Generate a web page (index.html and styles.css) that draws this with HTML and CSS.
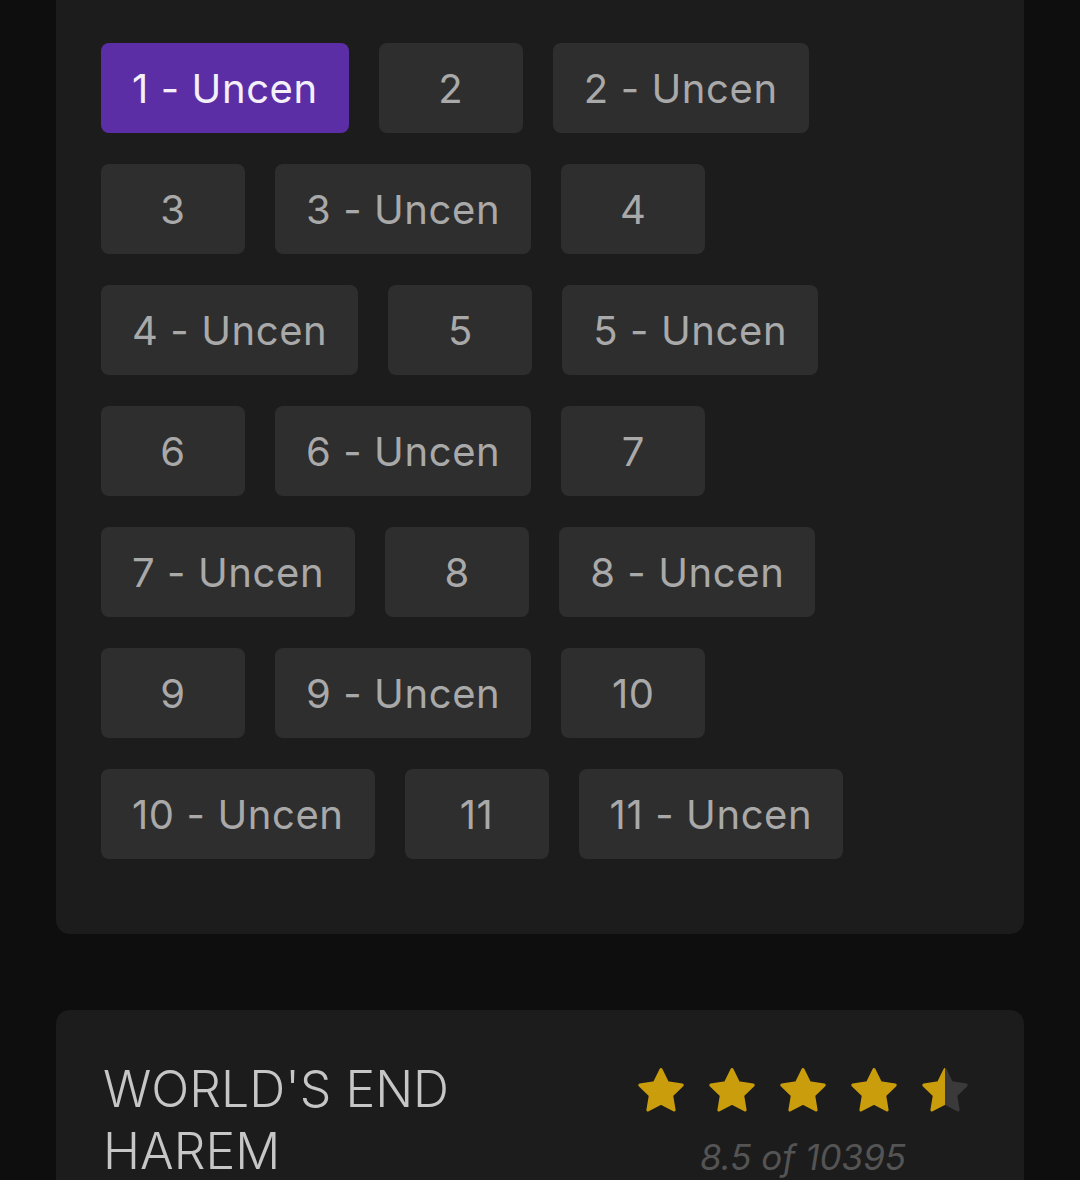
FILE: index.html
```html
<!DOCTYPE html>
<html lang="en">
<head>
    <meta charset="UTF-8">
    <meta name="viewport" content="width=device-width, initial-scale=1.0">
    <title>World's End Harem - Episodes</title>
    <link rel="stylesheet" href="styles.css">
</head>
<body>
    <div class="page">
        <div class="card episodes">
            <div class="ep-row">
                <a href="#" class="ep active">1 - Uncen</a>
                <a href="#" class="ep">2</a>
                <a href="#" class="ep">2 - Uncen</a>
            </div>
            <div class="ep-row">
                <a href="#" class="ep">3</a>
                <a href="#" class="ep">3 - Uncen</a>
                <a href="#" class="ep">4</a>
            </div>
            <div class="ep-row">
                <a href="#" class="ep">4 - Uncen</a>
                <a href="#" class="ep">5</a>
                <a href="#" class="ep">5 - Uncen</a>
            </div>
            <div class="ep-row">
                <a href="#" class="ep">6</a>
                <a href="#" class="ep">6 - Uncen</a>
                <a href="#" class="ep">7</a>
            </div>
            <div class="ep-row">
                <a href="#" class="ep">7 - Uncen</a>
                <a href="#" class="ep">8</a>
                <a href="#" class="ep">8 - Uncen</a>
            </div>
            <div class="ep-row">
                <a href="#" class="ep">9</a>
                <a href="#" class="ep">9 - Uncen</a>
                <a href="#" class="ep">10</a>
            </div>
            <div class="ep-row">
                <a href="#" class="ep">10 - Uncen</a>
                <a href="#" class="ep">11</a>
                <a href="#" class="ep">11 - Uncen</a>
            </div>
        </div>

        <div class="card info">
            <h1 class="title">WORLD'S END HAREM</h1>
            <div class="rating">
                <div class="stars">
                    <svg class="star" viewBox="0 0 24 24"><path d="M12 2.5l2.9 5.9 6.5.95-4.7 4.6 1.1 6.45L12 17.35l-5.8 3.05 1.1-6.45-4.7-4.6 6.5-.95z"/></svg>
                    <svg class="star" viewBox="0 0 24 24"><path d="M12 2.5l2.9 5.9 6.5.95-4.7 4.6 1.1 6.45L12 17.35l-5.8 3.05 1.1-6.45-4.7-4.6 6.5-.95z"/></svg>
                    <svg class="star" viewBox="0 0 24 24"><path d="M12 2.5l2.9 5.9 6.5.95-4.7 4.6 1.1 6.45L12 17.35l-5.8 3.05 1.1-6.45-4.7-4.6 6.5-.95z"/></svg>
                    <svg class="star" viewBox="0 0 24 24"><path d="M12 2.5l2.9 5.9 6.5.95-4.7 4.6 1.1 6.45L12 17.35l-5.8 3.05 1.1-6.45-4.7-4.6 6.5-.95z"/></svg>
                    <svg class="star half" viewBox="0 0 24 24">
                        <defs>
                            <linearGradient id="half-fill">
                                <stop offset="50%" stop-color="#c99d0c"/>
                                <stop offset="50%" stop-color="#3a3a3a"/>
                            </linearGradient>
                        </defs>
                        <path d="M12 2.5l2.9 5.9 6.5.95-4.7 4.6 1.1 6.45L12 17.35l-5.8 3.05 1.1-6.45-4.7-4.6 6.5-.95z" fill="url(#half-fill)" stroke="url(#half-fill)"/>
                    </svg>
                </div>
                <div class="score">8.5 of 10395</div>
            </div>
        </div>
    </div>
</body>
</html>
```

FILE: styles.css
```css
body {
    margin: 0;
    background: #0e0e0e;
    font-family: "Inter", "Open Sans", sans-serif;
}
.page {
    padding: 0 56px;
}
.card {
    background: #1c1c1c;
    border-radius: 14px;
}
.episodes {
    padding: 43px 45px 75px;
    border-radius: 0 0 14px 14px;
    display: flex;
    flex-direction: column;
    gap: 31px;
}
.ep-row {
    display: flex;
    gap: 30px;
}
.ep {
    box-sizing: border-box;
    min-width: 144px;
    height: 90px;
    padding: 0 31px;
    display: flex;
    align-items: center;
    justify-content: center;
    background: #2e2e2e;
    color: #a9a9a9;
    text-decoration: none;
    font-size: 40px;
    letter-spacing: 0.6px;
    border-radius: 8px;
    white-space: nowrap;
}
.ep.active {
    background: #5b2ea6;
    color: #f4f0fa;
}
.info {
    margin-top: 76px;
    padding: 48px 47px 40px;
    display: flex;
    justify-content: space-between;
    border-radius: 14px 14px 0 0;
}
.title {
    margin: 0;
    width: 420px;
    font-weight: 300;
    font-size: 50px;
    line-height: 62px;
    color: #c6c6c6;
}
.rating {
    margin-right: 5px;
    padding-top: 6px;
    text-align: center;
}
.stars {
    display: flex;
    gap: 17px;
}
.star {
    width: 54px;
    height: 54px;
    fill: #c99d0c;
    stroke: #c99d0c;
    stroke-width: 1.4;
    stroke-linejoin: round;
}
.score {
    margin-top: 18px;
    font-style: italic;
    font-size: 35px;
    color: #545454;
}
```
